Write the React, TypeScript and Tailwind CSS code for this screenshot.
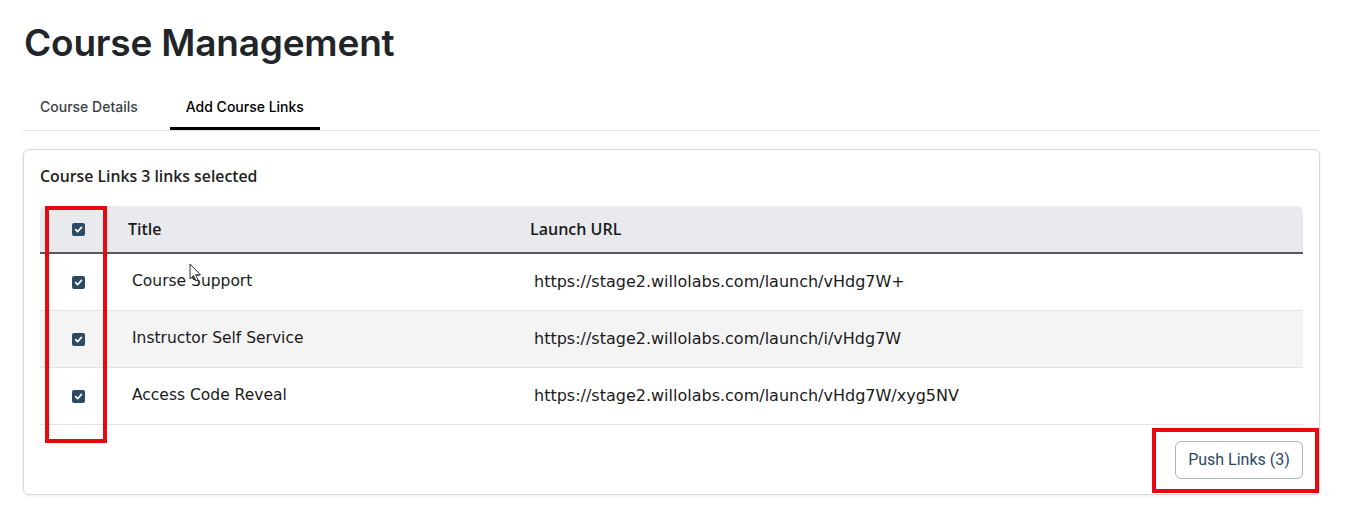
import React from 'react';

const links = [
  { title: 'Course Support', url: 'https://stage2.willolabs.com/launch/vHdg7W+' },
  { title: 'Instructor Self Service', url: 'https://stage2.willolabs.com/launch/i/vHdg7W' },
  { title: 'Access Code Reveal', url: 'https://stage2.willolabs.com/launch/vHdg7W/xyg5NV' },
];

function CheckBox() {
  return (
    <span className="w-[13px] h-[13px] rounded-[2px] bg-[#2b4a64] flex items-center justify-center">
      <svg width="9" height="9" viewBox="0 0 10 10">
        <path d="M1.8 5.2 L4 7.3 L8.3 2.6" fill="none" stroke="white" strokeWidth="1.9" strokeLinecap="round" strokeLinejoin="round" />
      </svg>
    </span>
  );
}

function App() {
  const bodyFont = { fontFamily: '"DejaVu Sans", "Open Sans", sans-serif' };
  const headFont = { fontFamily: '"Open Sans", "Liberation Sans", sans-serif' };

  return (
    <div className="relative w-[1362px] h-[512px] bg-white overflow-hidden">
      <div className="ml-[23px] w-[1297px] pt-[19px]">
        {/* Header */}
        <h1 className="pl-px text-[37px] leading-[48px] font-semibold text-[#212529] tracking-[-0.2px]" style={{ fontFamily: 'Inter, sans-serif' }}>
          Course Management
        </h1>

        {/* Tabs */}
        <div className="mt-[24px] flex gap-[15px] border-b border-[#e5e5e5]" style={{ fontFamily: 'Inter, sans-serif' }}>
          <button className="h-[39px] px-[17px] pb-[9px] text-[14px] text-[#3b3f44] font-medium">Course Details</button>
          <button className="h-[39px] px-[16px] pb-[6px] text-[14px] text-black font-medium border-b-[3px] border-black -mb-px">
            Add Course Links
          </button>
        </div>

        {/* Card */}
        <div className="mt-[18px] rounded-md border border-[#d6d6d6] shadow-[0_1px_3px_rgba(0,0,0,0.08)] px-[16px] pb-[15px]">
          <div className="h-[56px] pb-[3px] flex items-center text-[15.8px] font-semibold text-[#222]" style={headFont}>
            Course Links 3 links selected
          </div>

          <div className="text-[#1a1a1a]">
            <div className="grid grid-cols-[76px_402px_1fr] h-[48px] items-center bg-[#e9eaee] rounded-t-md border-b-2 border-[#56585c]" style={headFont}>
              <div className="flex justify-center"><CheckBox /></div>
              <div className="pl-3 text-[16px] font-semibold">Title</div>
              <div className="pl-3 text-[16px] font-semibold">Launch URL</div>
            </div>
            {links.map((l, i) => (
              <div
                key={l.title}
                className={`grid grid-cols-[76px_402px_1fr] h-[57px] items-center border-b border-[#e1e1e6] ${i === 1 ? 'bg-[#f4f4f5]' : 'bg-white'}`}
                style={bodyFont}
              >
                <div className="flex justify-center"><CheckBox /></div>
                <div className="pl-4 text-[15.5px]">{l.title}</div>
                <div className="pl-4 text-[16px]">{l.url}</div>
              </div>
            ))}
          </div>

          <div className="mt-[16px] flex justify-end">
            <button className="h-[38px] w-[128px] rounded-md border border-[#aeb5bf] text-[16px] text-[#2b4a66]" style={{ fontFamily: 'Roboto, sans-serif' }}>
              Push Links (3)
            </button>
          </div>
        </div>
      </div>

      {/* red annotation boxes */}
      <div className="absolute left-[45px] top-[206px] w-[62px] h-[237px] border-4 border-[#e8080d]" />
      <div className="absolute left-[1152px] top-[428px] w-[167px] h-[65px] border-4 border-[#e8080d]" />

      {/* mouse pointer */}
      <svg className="absolute left-[189px] top-[263px]" width="13" height="20" viewBox="0 0 13 20">
        <path d="M1 1 L1 16 L4.5 12.5 L7 18 L9 17 L6.6 11.8 L11.5 11.8 Z" fill="white" stroke="#333" strokeWidth="1" strokeLinejoin="round" />
      </svg>
    </div>
  );
}

export default App;
